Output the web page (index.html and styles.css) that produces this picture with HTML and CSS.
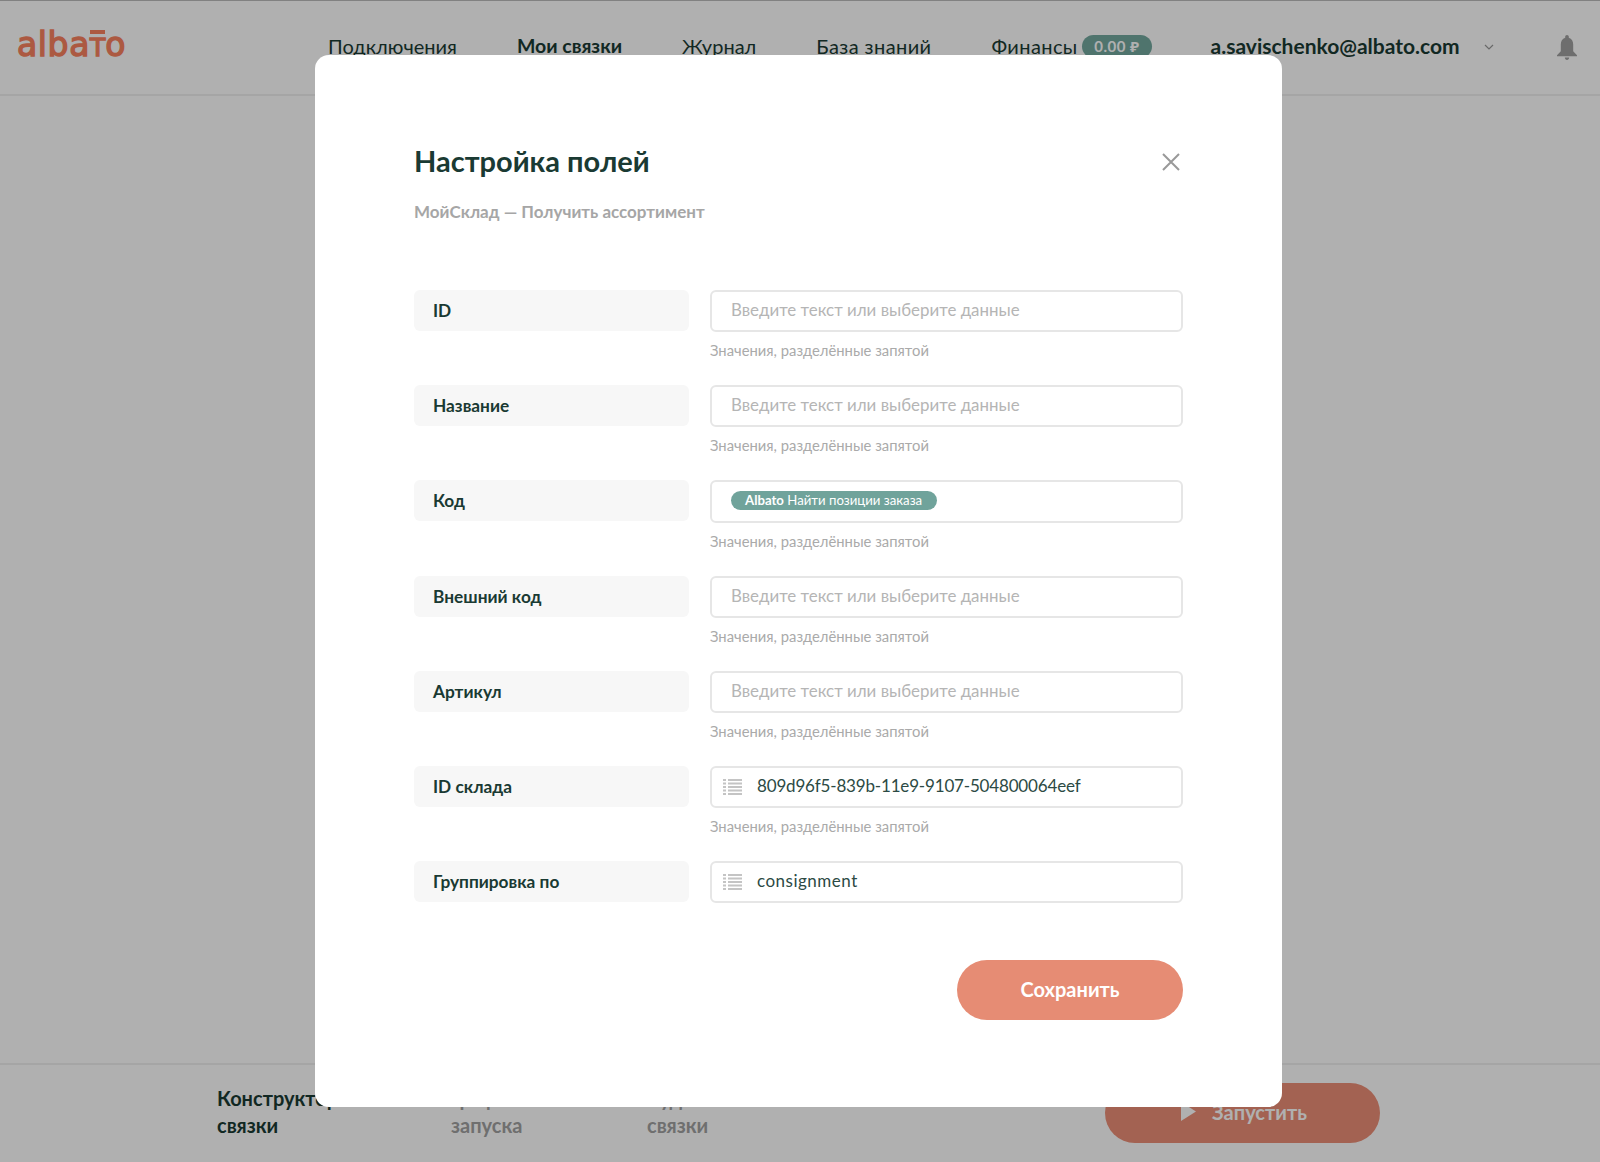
FILE: index.html
```html
<!DOCTYPE html>
<html lang="en">
<head>
    <meta charset="UTF-8">
    <title>Albato</title>
    <link rel="stylesheet" href="styles.css">
</head>
<body>

<header class="topbar">
    <div class="logo">alba<span class="logo-t">T</span>o</div>
    <nav class="nav">
        <a>Подключения</a>
        <a class="active">Мои связки</a>
        <a>Журнал</a>
        <a class="wide">База знаний</a>
        <a class="wide">Финансы <span class="balance">0.00 ₽</span></a>
    </nav>
    <div class="user">a.savischenko@albato.com</div>
    <svg class="chevron" width="10" height="6" viewBox="0 0 10 6"><path d="M1 1l4 4 4-4" fill="none" stroke="#999" stroke-width="1.2"/></svg>
    <svg class="bell" width="20" height="25" viewBox="0 0 20 25"><path d="M10 0c1 0 1.800.8 1.800 1.800v.9c3 .9 4.400 3.500 4.400 6.800v6.700l3.800 4v1H0v-1l3.800-4V9.500c0-3.300 1.400-5.900 4.400-6.800v-.9C8.200.8 9 0 10 0z" fill="#a0a0a0"/><path d="M7.800 22.500h4.400c0 1.400-1 2.500-2.200 2.500s-2.200-1.100-2.200-2.500z" fill="#a0a0a0"/></svg>
</header>

<main class="workspace"></main>

<footer class="steps">
    <div class="step current">Конструктор<br>связки</div>
    <div class="step">График<br>запуска</div>
    <div class="step">Аудит<br>связки</div>
    <button class="btn btn-run">
        <svg width="15" height="19" viewBox="0 0 15 19"><path d="M0 0l15 9.500L0 19z" fill="#fff"/></svg>
        Запустить
    </button>
</footer>

<div class="overlay"></div>

<div class="modal">
    <div class="modal-header">
        <h2>Настройка полей</h2>
        <svg class="close" width="20" height="20" viewBox="0 0 20 20"><path d="M2 2l16 16M18 2L2 18" fill="none" stroke="#999" stroke-width="2"/></svg>
    </div>
    <div class="subtitle">МойСклад — Получить ассортимент</div>

    <div class="fields">
        <div class="field">
            <div class="field-label">ID</div>
            <div class="field-control">
                <div class="input placeholder">Введите текст или выберите данные</div>
                <div class="hint">Значения, разделённые запятой</div>
            </div>
        </div>
        <div class="field">
            <div class="field-label">Название</div>
            <div class="field-control">
                <div class="input placeholder">Введите текст или выберите данные</div>
                <div class="hint">Значения, разделённые запятой</div>
            </div>
        </div>
        <div class="field">
            <div class="field-label">Код</div>
            <div class="field-control">
                <div class="input input-tall"><span class="chip"><b>Albato</b> Найти позиции заказа</span></div>
                <div class="hint">Значения, разделённые запятой</div>
            </div>
        </div>
        <div class="field">
            <div class="field-label">Внешний код</div>
            <div class="field-control">
                <div class="input placeholder">Введите текст или выберите данные</div>
                <div class="hint">Значения, разделённые запятой</div>
            </div>
        </div>
        <div class="field">
            <div class="field-label">Артикул</div>
            <div class="field-control">
                <div class="input placeholder">Введите текст или выберите данные</div>
                <div class="hint">Значения, разделённые запятой</div>
            </div>
        </div>
        <div class="field">
            <div class="field-label">ID склада</div>
            <div class="field-control">
                <div class="input input-list">
                    <svg width="19" height="16" viewBox="0 0 19 16"><path d="M0 1h3M5 1h14M0 4.500h3M5 4.500h14M0 8h3M5 8h14M0 11.500h3M5 11.500h14M0 15h3M5 15h14" stroke="#c4c4c4" stroke-width="2"/></svg>
                    <span class="value-id">809d96f5-839b-11e9-9107-504800064eef</span>
                </div>
                <div class="hint">Значения, разделённые запятой</div>
            </div>
        </div>
        <div class="field">
            <div class="field-label">Группировка по</div>
            <div class="field-control">
                <div class="input input-list">
                    <svg width="19" height="16" viewBox="0 0 19 16"><path d="M0 1h3M5 1h14M0 4.500h3M5 4.500h14M0 8h3M5 8h14M0 11.500h3M5 11.500h14M0 15h3M5 15h14" stroke="#c4c4c4" stroke-width="2"/></svg>
                    <span class="value-word">consignment</span>
                </div>
            </div>
        </div>
    </div>

    <div class="modal-footer">
        <button class="btn btn-save">Сохранить</button>
    </div>
</div>

</body>
</html>
```

FILE: styles.css
```css
:root {
    --dark: #1a3a33;
    --coral: #e68c74;
    --brand: #f9825f;
    --line: #e6e6e6;
}

* { box-sizing: border-box; }

html, body { height: 100%; }

body {
    font-family: 'Lato', 'Noto Sans', sans-serif;
    margin: 0;
    height: 1162px;
    overflow: hidden;
    background: #fff;
    color: var(--dark);
    display: flex;
    flex-direction: column;
}

/* Top bar */
.topbar {
    height: 96px;
    flex: none;
    display: flex;
    align-items: flex-start;
    padding: 30px 0 0 17px;
    border-top: 1px solid #bbb;
    border-bottom: 2px solid #f0f0f0;
}

.logo {
    width: 107px;
    font-family: 'DejaVu Sans', sans-serif;
    font-size: 33px;
    line-height: 28px;
    letter-spacing: 0.6px;
    white-space: nowrap;
    -webkit-text-stroke: 1.4px var(--brand);
    color: var(--brand);
}

.logo-t { position: relative; font-size: 25px; letter-spacing: 0; }
.logo-t::before {
    content: "";
    position: absolute;
    left: 0; top: -3px;
    width: 15px; height: 4px;
    background: var(--brand);
}

.nav {
    display: flex;
    gap: 60px;
    margin-left: 204px;
    font-size: 20px;
    line-height: 28px;
    padding-top: 1px;
}

.nav a.active { font-weight: 700; font-size: 19.5px; }
.nav a.wide { letter-spacing: 0.4px; }

.balance {
    display: inline-block;
    margin-left: -1px;
    padding: 0 12px;
    height: 23px;
    line-height: 22px;
    border-radius: 12px;
    background: #73a89f;
    color: #fff;
    font-size: 15px;
    font-weight: 700;
    letter-spacing: 0.5px;
    vertical-align: 2px;
}

.user {
    margin-left: 59px;
    font-size: 21px;
    line-height: 28px;
    font-weight: 700;
    padding-top: 1px;
}

.chevron { margin: 13px 0 0 24px; }
.bell { margin: 4px 0 0 63px; }

.workspace { flex: 1; }

/* Bottom bar */
.steps {
    height: 99px;
    flex: none;
    display: flex;
    align-items: flex-start;
    padding: 20px 0 0 217px;
    border-top: 2px solid #f0f0f0;
}

.step {
    width: 196px;
    font-size: 20px;
    line-height: 27px;
    font-weight: 700;
    color: #a1a1a1;
}

.step.current { width: 234px; color: var(--dark); }

.btn {
    border: none;
    border-radius: 30px;
    height: 60px;
    padding: 0 0 3px;
    color: #fff;
    font-family: inherit;
    font-size: 20px;
    font-weight: 700;
    background: var(--coral);
}

.btn-run {
    width: 275px;
    margin: -2px 0 0 262px;
    padding-left: 3px;
    display: flex;
    align-items: center;
    justify-content: center;
    gap: 16px;
    background: #ec8f77;
}

/* Modal */
.overlay {
    position: fixed;
    top: 0; left: 0; width: 100%; height: 100%;
    background: rgba(0,0,0,0.31);
}

.modal {
    position: fixed;
    top: 55px; left: 315px;
    width: 967px;
    height: 1052px;
    background: #fff;
    border-radius: 14px;
    padding: 86px 99px 0;
}

.modal-header {
    display: flex;
    justify-content: space-between;
    align-items: center;
    height: 38px;
}

.modal-header h2 {
    margin: 0;
    font-size: 29px;
    font-weight: 700;
}

.close { margin-right: 2px; margin-top: 3px; }

.subtitle {
    margin-top: 22px;
    font-size: 17px;
    line-height: 22px;
    font-weight: 700;
    color: #a6a6a6;
}

.fields {
    margin-top: 67px;
    display: flex;
    flex-direction: column;
    gap: 26px;
}

.field {
    display: grid;
    grid-template-columns: 275px 1fr;
    gap: 21px;
    align-items: start;
}

.field-label {
    height: 41px;
    line-height: 42px;
    padding-left: 19px;
    background: #f7f7f7;
    border-radius: 6px;
    font-size: 17.3px;
    font-weight: 700;
}

.input {
    height: 42px;
    border: 2px solid var(--line);
    border-radius: 6px;
    padding: 0 18px 4px 19px;
    display: flex;
    align-items: center;
    font-size: 17px;
    color: #2c4a44;
}

.input.placeholder { color: #b5b5b5; font-size: 16.9px; }
.input-tall { height: 43px; padding-bottom: 2px; }
.input-list { padding-left: 11px; gap: 15px; }
.input-list svg { margin-top: 4px; }
.value-id { letter-spacing: -0.17px; }
.value-word { letter-spacing: 0.5px; }

.chip {
    height: 19px;
    line-height: 18px;
    padding: 0 15px 0 14px;
    border-radius: 10px;
    background: #70a39b;
    color: #fff;
    font-size: 13.2px;
}

.hint {
    margin-top: 9px;
    font-size: 14.8px;
    line-height: 18px;
    color: #aaa;
}

.modal-footer {
    margin-top: 57px;
    display: flex;
    justify-content: flex-end;
}

.btn-save { width: 226px; }
```
